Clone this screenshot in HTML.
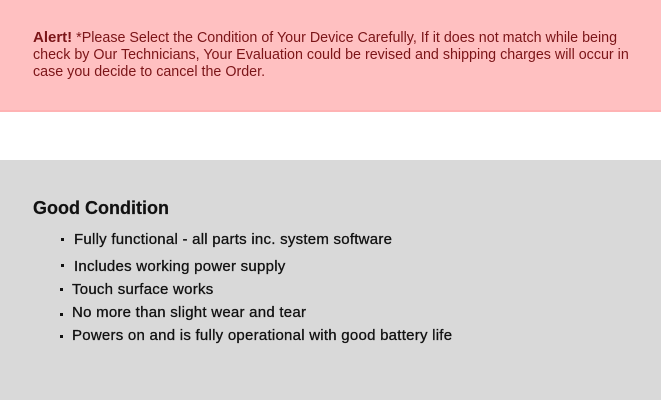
<!DOCTYPE html>
<html><head><meta charset="utf-8"><style>
html,body{margin:0;padding:0;width:661px;height:400px;overflow:hidden;background:#fff;font-family:"Liberation Sans",Arial,sans-serif}
.alert{position:absolute;left:0;top:0;width:661px;height:112px;background:#ffc0c1;border-bottom:2px solid #ffb3b4;box-sizing:border-box}
.alert p{margin:0;position:absolute;left:33px;top:29px;width:615px;font-size:14.3px;line-height:17px;color:#7b1518}
.alert b{font-size:15px}
.grey{position:absolute;left:0;top:160px;width:661px;height:240px;background:#d9d9d9}
h2{position:absolute;left:33px;top:198px;margin:0;font-size:18px;font-weight:bold;color:#111;-webkit-text-stroke:0.2px #111}
.li{position:absolute;font-size:15px;letter-spacing:0.25px;color:#111;-webkit-text-stroke:0.3px #111;line-height:16px;white-space:nowrap}
.b{position:absolute;width:3px;height:3px;background:#111}
</style></head><body>
<div class="alert"><p><b>Alert!</b> *Please Select the Condition of Your Device Carefully, If it does not match while being check by Our Technicians, Your Evaluation could be revised and shipping charges will occur in case you decide to cancel the Order.</p></div>
<div class="grey"></div>
<h2>Good Condition</h2>
<div class="b" style="left:61px;top:238px"></div><div class="li" style="left:74px;top:232px">Fully functional - all parts inc. system software</div>
<div class="b" style="left:61px;top:264px"></div><div class="li" style="left:74px;top:259px">Includes working power supply</div>
<div class="b" style="left:60px;top:288px"></div><div class="li" style="left:72px;top:282px">Touch surface works</div>
<div class="b" style="left:60px;top:313px"></div><div class="li" style="left:72px;top:305px">No more than slight wear and tear</div>
<div class="b" style="left:60px;top:335px"></div><div class="li" style="left:72px;top:328px">Powers on and is fully operational with good battery life</div>
</body></html>
